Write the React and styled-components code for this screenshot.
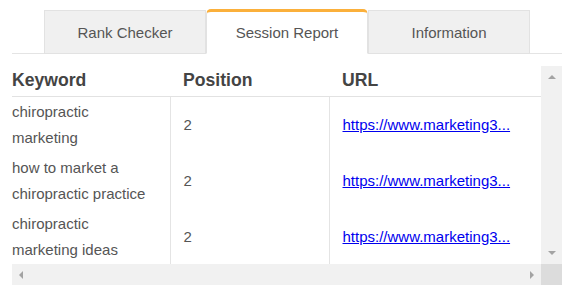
import React from 'react';
import styled, { createGlobalStyle } from 'styled-components';

const GlobalStyle = createGlobalStyle`
    body {
        margin: 0;
        background: #fff;
        font-family: "Liberation Sans", Arial, sans-serif;
    }
`;

const Wrapper = styled.div`
    width: 550px;
    margin-left: 12px;
`;

const TabBar = styled.div`
    display: flex;
    justify-content: center;
    align-items: flex-end;
    padding-top: 9px;
    border-bottom: 1px solid #e4e4e4;
`;

const Tab = styled.div`
    width: 162px;
    height: ${p => (p.$active ? 45 : 44)}px;
    box-sizing: border-box;
    margin-bottom: -1px;
    display: flex;
    align-items: center;
    justify-content: center;
    font-size: 15px;
    color: #555;
    background: ${p => (p.$active ? '#fff' : '#f0f0f0')};
    border: 1px solid #e2e2e2;
    border-top: ${p => (p.$active ? '3px solid #fbb03b' : '1px solid #e2e2e2')};
    border-bottom-color: ${p => (p.$active ? '#fff' : '#e2e2e2')};
    border-radius: ${p => (p.$active ? '5px 5px 0 0' : '0')};
    padding-top: ${p => (p.$active ? 0 : 1)}px;
`;

const ScrollFrame = styled.div`
    margin-top: 12px;
    display: grid;
    grid-template-columns: 529px 21px;
    grid-template-rows: 198px 21px;
`;

const Viewport = styled.div`
    overflow: hidden;
`;

const Track = styled.div`
    background: #f1f1f1;
    display: flex;
    flex-direction: ${p => (p.$vertical ? 'column' : 'row')};
    justify-content: space-between;
    align-items: center;
    padding: ${p => (p.$vertical ? '9px 0' : '0 7px')};
    box-sizing: border-box;
`;

const Corner = styled.div`
    background: #dcdcdc;
`;

const Arrow = styled.span`
    width: 0;
    height: 0;
    border-style: solid;
    ${p => p.$dir === 'up' && 'border-width: 0 4px 4px 4px; border-color: transparent transparent #a3a3a3 transparent;'}
    ${p => p.$dir === 'down' && 'border-width: 4px 4px 0 4px; border-color: #a3a3a3 transparent transparent transparent;'}
    ${p => p.$dir === 'left' && 'border-width: 4px 4px 4px 0; border-color: transparent #a3a3a3 transparent transparent;'}
    ${p => p.$dir === 'right' && 'border-width: 4px 0 4px 4px; border-color: transparent transparent transparent #a3a3a3;'}
`;

const Table = styled.table`
    border-collapse: collapse;
    table-layout: fixed;
    width: 600px;
`;

const Th = styled.th`
    width: ${p => p.$width}px;
    height: 30px;
    padding: 0 0 0 ${p => (p.$first ? 0 : 13)}px;
    text-align: left;
    font-size: 17.6px;
    font-weight: bold;
    color: #444;
    border-bottom: 1px solid #e2e2e2;
    box-sizing: border-box;
`;

const Td = styled.td`
    height: 56px;
    padding: 2px 12px 2px ${p => (p.$first ? 0 : 13)}px;
    box-sizing: border-box;
    font-size: 15px;
    line-height: 26px;
    color: #555;
    vertical-align: middle;
    border-left: ${p => (p.$first ? 'none' : '1px solid #e4e4e4')};
    white-space: ${p => (p.$nowrap ? 'nowrap' : 'normal')};
`;

const Link = styled.a`
    color: #0000ee;
    text-decoration: underline;
`;

const rows = [
    { keyword: 'chiropractic marketing', position: 2 },
    { keyword: 'how to market a chiropractic practice', position: 2 },
    { keyword: 'chiropractic marketing ideas', position: 2 },
];

const tabs = ['Rank Checker', 'Session Report', 'Information'];

export default function App() {
    return (
        <Wrapper>
            <GlobalStyle />
            <TabBar>
                {tabs.map(t => (
                    <Tab key={t} $active={t === 'Session Report'}>{t}</Tab>
                ))}
            </TabBar>
            <ScrollFrame>
                <Viewport>
                    <Table>
                        <thead>
                            <tr>
                                <Th $first $width={158}>Keyword</Th>
                                <Th $width={159}>Position</Th>
                                <Th $width={283}>URL</Th>
                            </tr>
                        </thead>
                        <tbody>
                            {rows.map((r, i) => (
                                <tr key={i}>
                                    <Td $first>{r.keyword}</Td>
                                    <Td>{r.position}</Td>
                                    <Td $nowrap>
                                        <Link href="#">https://www.marketing3...</Link>
                                    </Td>
                                </tr>
                            ))}
                        </tbody>
                    </Table>
                </Viewport>
                <Track $vertical>
                    <Arrow $dir="up" />
                    <Arrow $dir="down" />
                </Track>
                <Track>
                    <Arrow $dir="left" />
                    <Arrow $dir="right" />
                </Track>
                <Corner />
            </ScrollFrame>
        </Wrapper>
    );
}
